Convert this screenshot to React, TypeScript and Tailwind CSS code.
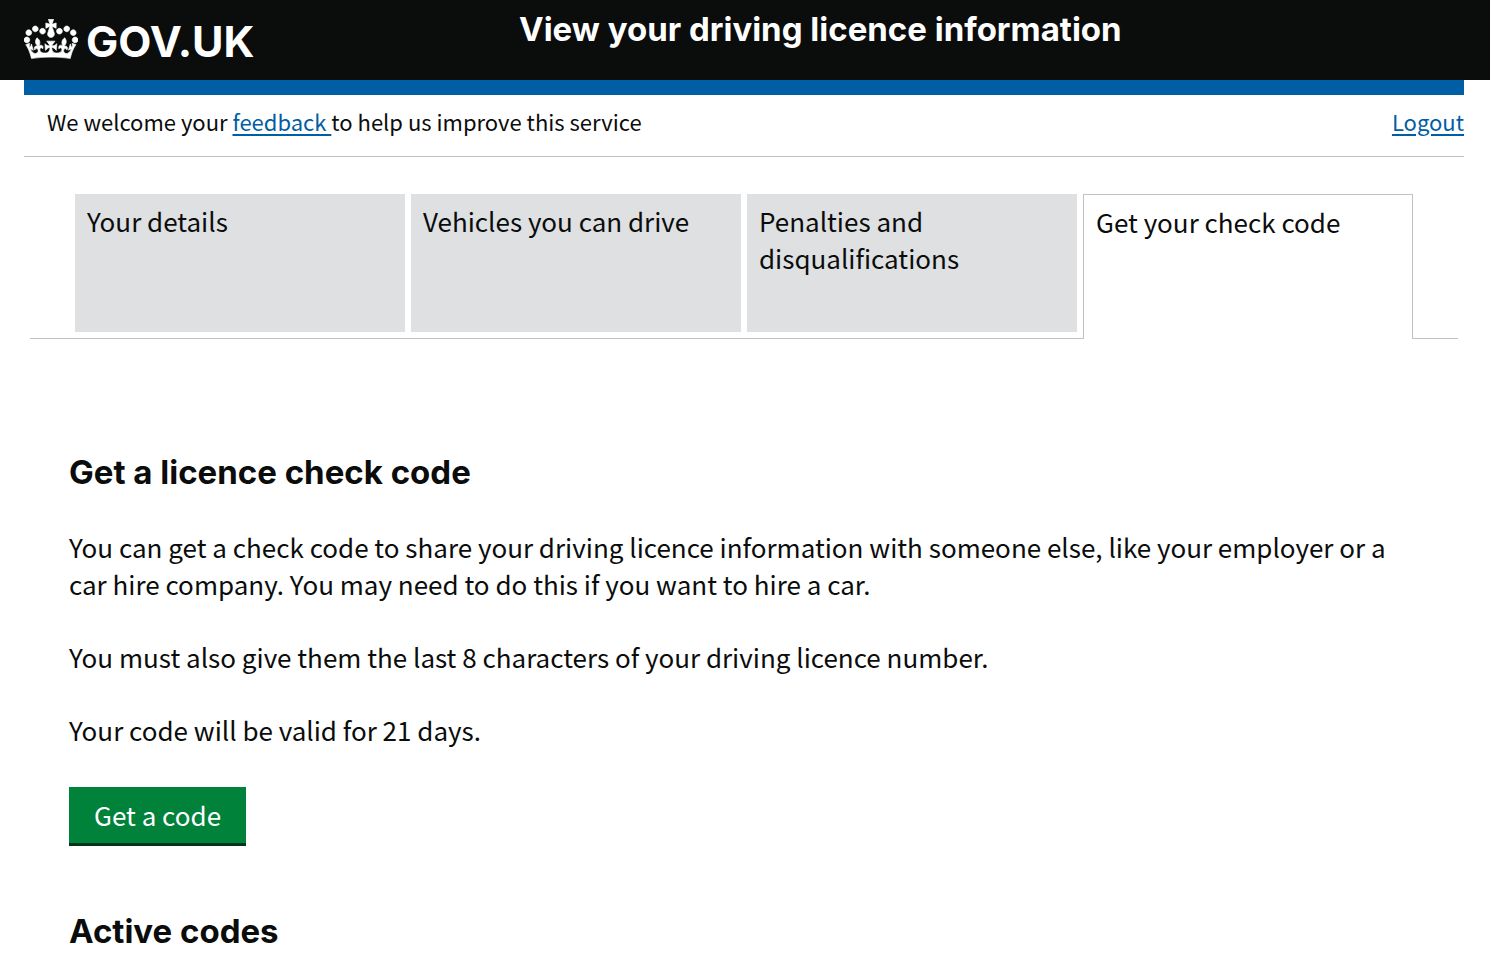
const tabs = [
  { label: 'Your details', active: false },
  { label: 'Vehicles you can drive', active: false },
  { label: 'Penalties and disqualifications', active: false },
  { label: 'Get your check code', active: true },
];

function Crown() {
  return (
    <svg
      aria-hidden="true"
      viewBox="0 0 132 97"
      className="h-10 w-[54px] shrink-0"
      fill="currentColor"
      stroke="currentColor"
      strokeWidth="1.6"
    >
      <path
        fillRule="evenodd"
        d="M25 30.2c3.5 1.5 7.7-.2 9.1-3.7 1.5-3.6-.2-7.8-3.9-9.2-3.6-1.4-7.6.3-9.1 3.9-1.4 3.5.3 7.5 3.9 9zM9 39.5c3.6 1.5 7.8-.2 9.2-3.7 1.5-3.6-.2-7.8-3.9-9.1-3.6-1.5-7.6.2-9.1 3.8-1.4 3.5.3 7.5 3.8 9zM4.4 57.2c3.5 1.5 7.7-.2 9.1-3.8 1.5-3.6-.2-7.7-3.9-9.1-3.5-1.5-7.6.3-9.1 3.8-1.4 3.5.3 7.6 3.9 9.1zm38.3-21.4c3.5 1.5 7.7-.2 9.1-3.8 1.5-3.6-.2-7.7-3.9-9.1-3.6-1.5-7.6.3-9.1 3.8-1.3 3.6.4 7.7 3.9 9.1zm64.4-5.6c-3.6 1.5-7.8-.2-9.1-3.7-1.5-3.6.2-7.8 3.8-9.2 3.6-1.4 7.7.3 9.2 3.9 1.3 3.5-.4 7.5-3.9 9zm15.9 9.3c-3.6 1.5-7.7-.2-9.1-3.7-1.5-3.6.2-7.8 3.7-9.1 3.6-1.5 7.7.2 9.2 3.8 1.5 3.5-.3 7.5-3.8 9zm4.7 17.7c-3.6 1.5-7.8-.2-9.2-3.8-1.5-3.6.2-7.7 3.9-9.1 3.6-1.5 7.7.3 9.2 3.8 1.3 3.5-.4 7.6-3.9 9.1zM89.3 35.8c-3.6 1.5-7.8-.2-9.2-3.8-1.4-3.6.2-7.7 3.9-9.1 3.6-1.5 7.7.3 9.2 3.8 1.4 3.6-.3 7.7-3.9 9.1zM69.7 17.7l8.9 4.7V9.3l-8.9 2.8c-.2-.3-.5-.6-.9-.9L72.4 0H59.6l3.5 11.2c-.3.3-.6.5-.9.9l-8.8-2.8v13.1l8.8-4.7c.3.3.6.7.9.9l-5 15.4v.1c-.2.8-.4 1.6-.4 2.4 0 4.1 3.1 7.5 7 8.1h.2c.3 0 .7.1 1 .1.4 0 .7 0 1-.1h.2c4-.6 7.1-4.1 7.1-8.1 0-.8-.1-1.7-.4-2.4V34l-5.1-15.4c.4-.2.7-.6 1-.9zM66 92.8c16.9 0 32.8 1.1 47.1 3.2 4-16.9 8.9-26.7 14-33.5l-9.6-3.4c1 4.9 1.1 7.2 0 10.2-1.5-1.4-3-4.3-4.2-8.7L108.6 76c2.8-2 5-3.2 7.5-3.3-4.4 9.4-10 11.9-13.6 11.2-4.3-.8-6.3-4.6-5.6-7.9 1-4.7 5.7-5.9 8-.5 4.3-8.7-3-11.4-7.6-8.8 7.1-7.2 7.9-13.5 2.1-21.1-8 6.1-8.1 12.3-4.5 20.8-4.7-5.4-12.1-2.5-9.5 6.2 3.4-5.2 7.9-2 7.2 3.1-.6 4.3-6.4 7.8-13.5 7.2-10.3-.9-10.9-8-11.2-13.8 2.5-.5 7.1 1.8 11 7.3L80.2 60c-4.1 4.4-8 5.3-12.3 5.4 1.4-4.4 8-11.6 8-11.6H55.5s6.4 7.2 7.9 11.6c-4.2-.1-8-1-12.3-5.4l1.4 16.4c3.9-5.5 8.5-7.7 10.9-7.3-.3 5.8-.9 12.8-11.1 13.8-7.2.6-12.9-2.9-13.5-7.2-.7-5 3.8-8.3 7.1-3.1 2.7-8.7-4.6-11.6-9.4-6.2 3.7-8.5 3.6-14.7-4.6-20.8-5.8 7.6-5 13.9 2.2 21.1-4.7-2.6-11.9.1-7.7 8.8 2.3-5.5 7.1-4.2 8.1.5.7 3.3-1.3 7.1-5.7 7.9-3.5.7-9-1.8-13.5-11.2 2.5.1 4.7 1.3 7.5 3.3l-4.7-15.4c-1.2 4.4-2.7 7.2-4.3 8.7-1.1-3-.9-5.3 0-10.2l-9.5 3.4c5 6.9 9.9 16.7 14 33.5 14.8-2.1 30.8-3.2 47.7-3.2z"
      />
    </svg>
  );
}

export default function App() {
  return (
    <div className="min-h-screen bg-white font-['Noto_Sans_CJK_SC','Noto_Sans',sans-serif] text-[26px] leading-[37px] text-[#0b0c0c]">
      <header className="bg-[#0b0c0c] font-['Inter',sans-serif] font-bold text-white">
        <div className="mr-[26px] ml-6 flex h-20 items-start">
          <div className="w-1/3 pt-[19px]">
            <a href="#home" className="inline-flex items-start gap-2 text-[43px] leading-[44px]">
              <Crown />
              <span>GOV.UK</span>
            </a>
          </div>
          <p className="pt-[9px] pl-[15px] text-[33px] leading-10">
            View your driving licence information
          </p>
        </div>
      </header>

      <div className="mr-[26px] ml-6">
        <div className="flex justify-between border-t-[15px] border-b border-t-[#005ea5] border-b-[#bfc1c3] pt-[11px] pb-5 pl-[23px] text-[22px] leading-[30px]">
          <p>
            We welcome your{' '}
            <a href="#feedback" className="whitespace-pre text-[#005ea5] underline decoration-2 underline-offset-3">
              {'feedback '}
            </a>
            to help us improve this service
          </p>
          <a href="#logout" className="text-[#005ea5] underline decoration-2 underline-offset-3">
            Logout
          </a>
        </div>

        <nav aria-label="Licence sections" className="mx-1.5 mt-[37px]">
          <ul className="grid grid-cols-4 gap-1.5 border-b border-[#bfc1c3] px-[45px]">
            {tabs.map((tab) => (
              <li key={tab.label}>
                <a
                  href="#tab"
                  aria-current={tab.active ? 'page' : undefined}
                  className={
                    tab.active
                      ? '-mb-px block h-[145px] border border-b-0 border-[#bfc1c3] bg-white px-3 py-2'
                      : 'block h-[138px] bg-[#dee0e2] px-3 py-2'
                  }
                >
                  {tab.label}
                </a>
              </li>
            ))}
          </ul>
        </nav>

        <main className="mt-[113px] px-[45px] pb-6">
          <h1 className="font-['Inter',sans-serif] text-[33px] leading-10 font-bold">
            Get a licence check code
          </h1>
          <div className="mt-9 flex flex-col gap-9">
            <p>
              You can get a check code to share your driving licence information with someone else,
              like your employer or a car hire company. You may need to do this if you want to hire a
              car.
            </p>
            <p>You must also give them the last 8 characters of your driving licence number.</p>
            <p>Your code will be valid for 21 days.</p>
          </div>
          <button
            type="button"
            className="mt-[39px] block border-b-3 border-[#003618] bg-[#00823b] px-[25px] pt-[9px] pb-2.5 text-white"
          >
            Get a code
          </button>
          <h2 className="mt-[65px] font-['Inter',sans-serif] text-[33px] leading-10 font-bold">
            Active codes
          </h2>
        </main>
      </div>
    </div>
  );
}
